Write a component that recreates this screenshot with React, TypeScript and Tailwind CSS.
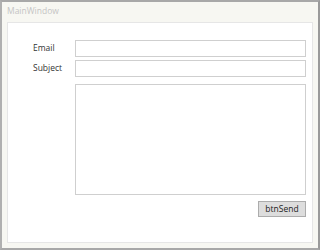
export default function App() {
  return (
    <div className="w-[320px] h-[250px] bg-[#f7f7f2] border-t-2 border-l-2 border-r-2 border-b-2 border-t-[#a8a8a8] border-l-[#b0b0b0] border-r-[#9a9a9a] border-b-[#a8a8a8] flex flex-col font-['Open_Sans',sans-serif]">
      <div className="h-[20px] pl-[5px] pt-[3px] text-[8.5px] text-[#c4c4c4] leading-[12px]">MainWindow</div>
      <div className="ml-[5px] mr-[5px] mb-[5px] flex-1 bg-white border border-[#e6e6e6] flex flex-col pt-[17px] pl-[25px] text-[8.5px] text-[#333]">
        <div className="flex items-center h-[17px]">
          <span className="w-[42px]">Email</span>
          <div className="w-[231px] h-[17px] border border-[#cfcfcf]" />
        </div>
        <div className="flex items-center h-[17px] mt-[3px]">
          <span className="w-[42px]">Subject</span>
          <div className="w-[231px] h-[17px] border border-[#cfcfcf]" />
        </div>
        <div className="flex mt-[7px]">
          <span className="w-[42px]" />
          <div className="w-[231px] h-[111px] border border-[#cfcfcf]" />
        </div>
        <div className="flex justify-end w-[273px] mt-[6px]">
          <div className="w-[48px] h-[16px] bg-[#dddddd] border border-[#acacac] flex items-center justify-center text-[8.5px] text-[#222]">btnSend</div>
        </div>
      </div>
    </div>
  );
}
